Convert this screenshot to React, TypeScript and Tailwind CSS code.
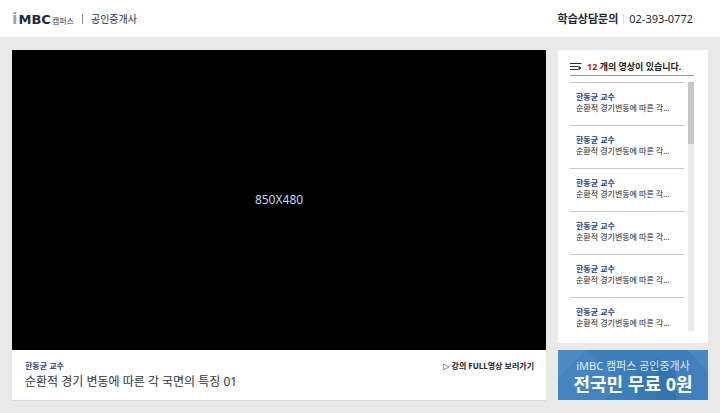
import { useState } from 'react';

const lectures = [
  { id: 1, teacher: '한동균 교수', title: '순환적 경기변동에 따른 각...' },
  { id: 2, teacher: '한동균 교수', title: '순환적 경기변동에 따른 각...' },
  { id: 3, teacher: '한동균 교수', title: '순환적 경기변동에 따른 각...' },
  { id: 4, teacher: '한동균 교수', title: '순환적 경기변동에 따른 각...' },
  { id: 5, teacher: '한동균 교수', title: '순환적 경기변동에 따른 각...' },
  { id: 6, teacher: '한동균 교수', title: '순환적 경기변동에 따른 각...' },
];

function Header() {
  return (
    <header className="flex h-[37px] items-center justify-between bg-white pt-px pr-[27px] pl-3">
      <div className="flex items-center">
        <a href="#" className="flex items-baseline leading-4">
          <span className="font-['DejaVu_Sans'] text-base font-bold text-[#a3a3a3]">i</span>
          <span className="ml-px font-['DejaVu_Sans'] text-[13px] font-bold text-[#1f2b3a]">MBC</span>
          <span className="ml-px text-[8px] text-[#3c4654]">캠퍼스</span>
        </a>
        <span className="mx-2 h-[10px] w-px bg-[#8f8f8f]" />
        <h1 className="text-[10px] leading-4 text-[#2c2f36]">공인중개사</h1>
      </div>
      <div className="flex items-center text-[11px] leading-4 text-[#22272e]">
        <strong className="font-bold">학습상담문의</strong>
        <span className="mx-[5px] h-[10px] w-px bg-[#dedede]" />
        <a href="tel:02-393-0772">02-393-0772</a>
      </div>
    </header>
  );
}

function Player() {
  return (
    <main className="flex min-w-0 flex-1 flex-col border-b border-[#d8d8d8] bg-white">
      <div className="flex aspect-video w-full items-center justify-center bg-black text-xs text-[#c3d9f0]">
        850X480
      </div>
      <div className="flex items-start justify-between pt-2 pr-3 pb-[10px] pl-[13px]">
        <div>
          <p className="text-[8px] leading-4 font-bold text-[#1f447f]">한동균 교수</p>
          <h2 className="text-xs leading-4 text-[#333]">순환적 경기 변동에 따른 각 국면의 특징 01</h2>
        </div>
        <a href="#" className="text-[8px] leading-4 font-bold text-[#222] hover:underline">
          <span className="font-['DejaVu_Sans'] font-normal">▷</span> 강의 FULL영상 보러가기
        </a>
      </div>
    </main>
  );
}

function LectureList() {
  const [selected, setSelected] = useState(1);

  return (
    <section className="bg-white pt-2 pr-[14px] pb-3 pl-3">
      <div className="flex h-[18px] items-center gap-[5px] border-b border-[#9a9a9a]">
        <svg viewBox="0 0 12 8" className="h-2 w-3" fill="none" stroke="#2b3038">
          <path d="M0 .5H11.5M0 3.5H8M0 6.5H8" />
          <path d="M8.5 2.5L11.5 5L8.5 7.5Z" fill="#2b3038" stroke="none" />
        </svg>
        <h3 className="text-[9px] leading-4 font-bold whitespace-nowrap text-[#222]">
          <span className="text-[#c4161c]">12</span> 개의 영상이 있습니다.
        </h3>
      </div>
      {/* List */}
      <div className="mt-[6px] flex h-[249px] gap-1">
        <ul className="min-w-0 flex-1 overflow-hidden">
          {lectures.map((lecture) => (
            <li key={lecture.id} className="h-[43px] border-t border-[#c9c9c9]">
              <button
                type="button"
                aria-pressed={selected === lecture.id}
                onClick={() => setSelected(lecture.id)}
                className="block w-full pt-2 pl-[6px] text-left text-[8px] leading-[11px] whitespace-nowrap"
              >
                <span className="block font-bold text-[#1f447f]">{lecture.teacher}</span>
                <span className="block text-[#222]">{lecture.title}</span>
              </button>
            </li>
          ))}
        </ul>
        <div className="w-[6px] bg-[#e9e9e9]">
          <div className="h-1/4 bg-[#c6c6c6]" />
        </div>
      </div>
    </section>
  );
}

function Banner() {
  return (
    <a href="#" className="relative block h-[50px] overflow-hidden bg-[#3d7ebd] text-center text-white">
      <svg viewBox="0 0 150 50" preserveAspectRatio="none" className="absolute inset-0 h-full w-full">
        <path d="M0 0H28L0 30Z" fill="#4c8ac5" />
        <path d="M28 0L62 34L46 50H0V30Z" fill="#4584c1" />
        <path d="M78 22L98 8L118 22V50H78Z" fill="#3778b6" />
        <path d="M98 8L118 22V50H98Z" fill="#3373b0" />
        <path d="M118 22L150 0V50H118Z" fill="#4180be" />
        <path d="M130 0H150V22Z" fill="#4a88c3" />
      </svg>
      <span className="relative block pt-2 text-[11px] leading-4 whitespace-nowrap text-[#dcecfb]">iMBC 캠퍼스 공인중개사</span>
      <strong className="relative block text-lg leading-5 font-bold whitespace-nowrap">전국민 무료 0원</strong>
    </a>
  );
}

export default function App() {
  return (
    <div className="min-h-screen bg-[#e9e9e9] font-['Noto_Sans','Noto_Sans_CJK_KR',sans-serif]">
      <Header />
      <div className="flex items-start gap-3 px-3 pt-[13px] pb-3">
        <Player />
        <aside className="flex w-[150px] shrink-0 flex-col gap-[7px]">
          <LectureList />
          <Banner />
        </aside>
      </div>
    </div>
  );
}
